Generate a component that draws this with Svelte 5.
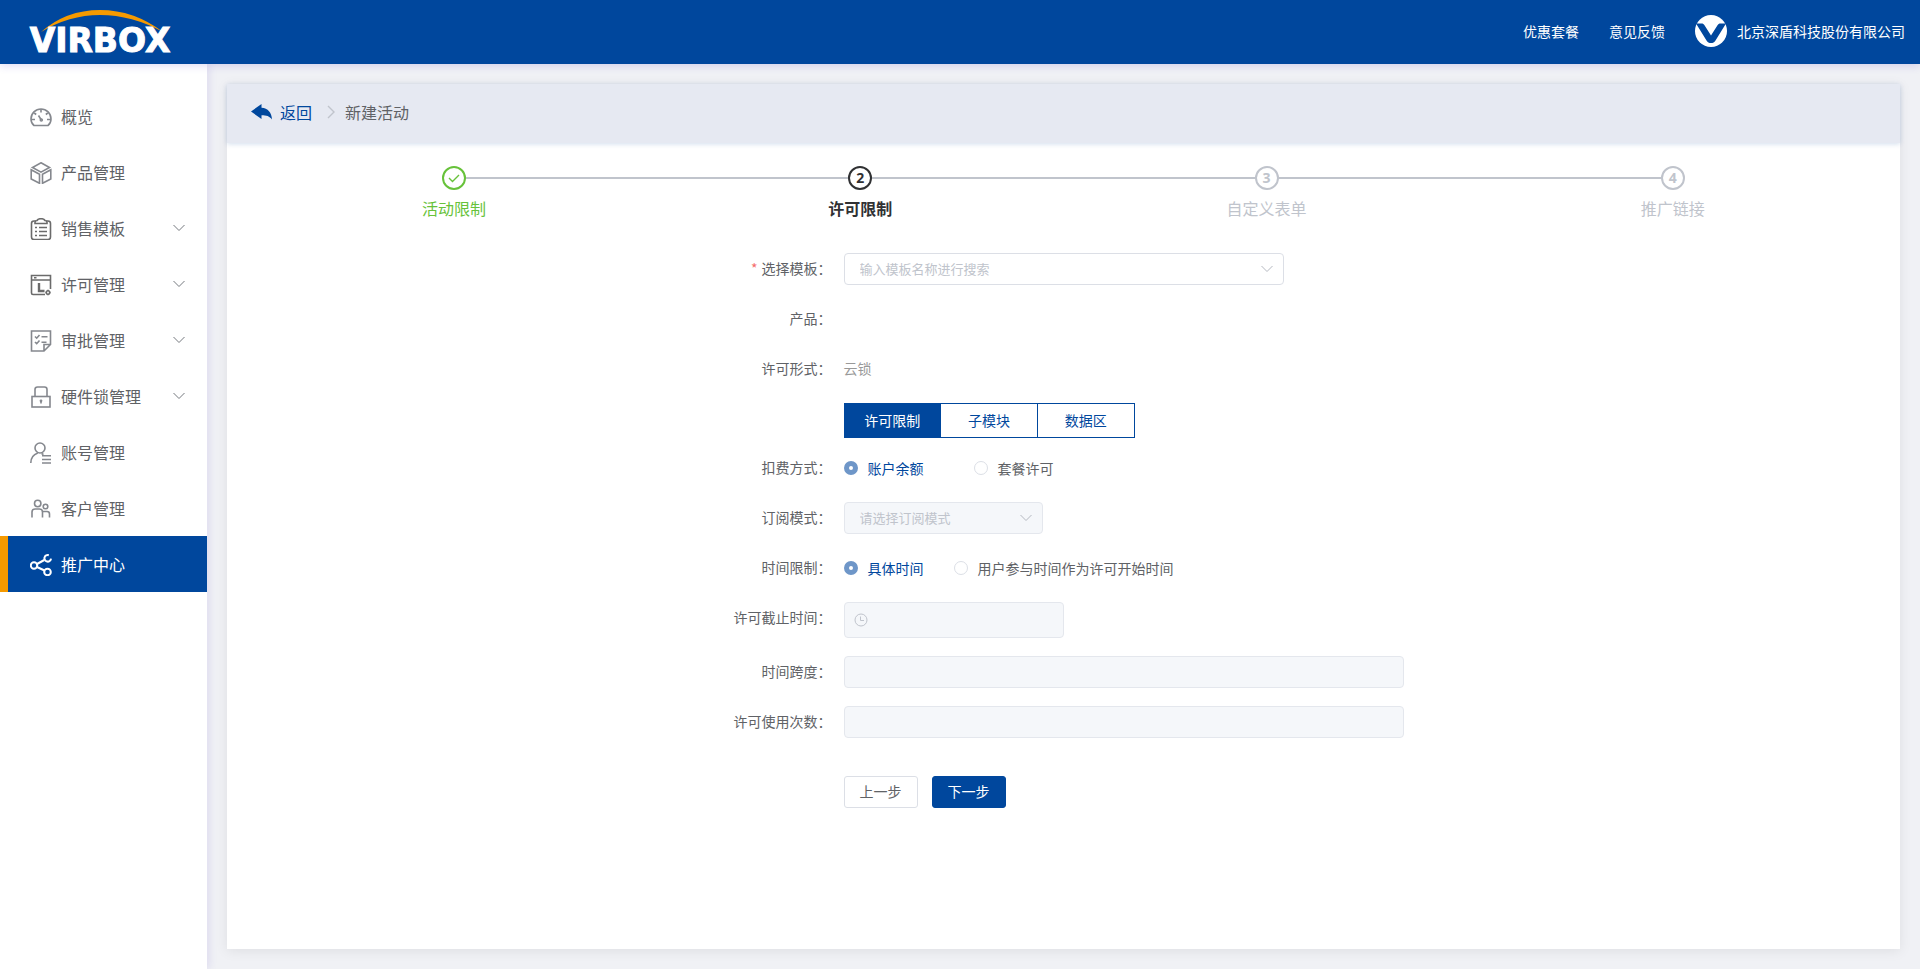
<script lang="ts">
	type MenuItem = { icon: string; label: string; children?: boolean; active?: boolean };

	const menu: MenuItem[] = [
		{ icon: 'gauge', label: '概览' },
		{ icon: 'box', label: '产品管理' },
		{ icon: 'clipboard', label: '销售模板', children: true },
		{ icon: 'license', label: '许可管理', children: true },
		{ icon: 'audit', label: '审批管理', children: true },
		{ icon: 'lock', label: '硬件锁管理', children: true },
		{ icon: 'account', label: '账号管理' },
		{ icon: 'customer', label: '客户管理' },
		{ icon: 'share', label: '推广中心', active: true }
	];

	const steps = [
		{ title: '活动限制', status: 'finish' },
		{ title: '许可限制', status: 'process' },
		{ title: '自定义表单', status: 'wait' },
		{ title: '推广链接', status: 'wait' }
	];

	const tabs = ['许可限制', '子模块', '数据区'];

	let activeTab = $state(0);
	let payMode = $state('balance');
	let timeMode = $state('fixed');
</script>

{#snippet chevron()}
	<svg class="chevron" viewBox="0 0 12 8" aria-hidden="true"><path d="M.5 1 6 6.5 11.5 1" /></svg>
{/snippet}

{#snippet menuIcon(name: string)}
	<svg class="menu-icon {name}" viewBox="0 0 22 22" aria-hidden="true">
		{#if name === 'gauge'}
			<path d="M4 19.500C2 18 1 15.500 1 13a10 10 0 0 1 20 0c0 2.500-1 5-3 6.500z" />
			<path d="M11 3v3.500M4.200 7l2 1.500M17.800 7l-2 1.500M1 13.500h4M17 13.500h4M8.500 9.500l2.500 4" />
			<circle cx="11.300" cy="14" r="1" />
		{:else if name === 'box'}
			<path d="m11 .8 8.500 4.700L11 10.200 2.500 5.500zM1.200 7.800l8.300 4.500v9L1.200 17zM20.800 7.800l-8.300 4.500v9l8.300-4.300z" />
		{:else if name === 'clipboard'}
			<rect x="1.500" y="3" width="19" height="18.500" rx="2.500" />
			<path class="paper" d="M5 5.500V4.200C5 3 6 2.700 7 2.500 7.800 1 9 .7 11 .7s3.200.3 4 1.800c1 .2 2 .5 2 1.700v1.300z" />
			<path d="M5 9.500h2M9 9.500h8M5 13.500h2M9 13.500h8M5 17.500h2M9 17.500h8" />
		{:else if name === 'license'}
			<path d="M15 20.500H3A1.500 1.500 0 0 1 1.500 19V1.500h19V15M1.500 6h19M4 3.800h2.500" />
			<path class="heavy" d="M9 9v8h5.500" />
			<circle cx="18" cy="18.500" r="1.700" />
			<path d="M18 15.800v1M18 20.200v1M15.500 18.500h.8M19.700 18.500h.8" />
		{:else if name === 'audit'}
			<path d="M14 21H1.500V1h19v13.500zM14 21v-6.500h6.500" />
			<path d="m5 6.500 1.700 1.700L9.500 5M5 12l1.700 1.700 2.800-3.200M11.500 6.700h6M11.500 12.200h5" />
		{:else if name === 'lock'}
			<rect x="2" y="10.500" width="18" height="10.500" />
			<path d="M5 10.500V3.500C5 2 6 1 7.500 1h7C16 1 17 2 17 3.500v7M11 14.500v3" />
			<circle cx="11" cy="14.800" r=".6" />
		{:else if name === 'account'}
			<circle cx="10" cy="6" r="5" />
			<path d="M.8 21c0-5 2.700-8.500 7-10M11.500 11.500l2 1M12 13.800h9M12 17.500h9M12 21h9" />
		{:else if name === 'customer'}
			<circle cx="7.700" cy="5.500" r="3.200" />
			<circle cx="15.500" cy="8.500" r="2.300" />
			<path d="M2 19.500V14c0-2 1-3 3-3h4.500c2 0 3 1 3 3v5.500M12.500 13.500H17c1.500 0 2.500 1 2.500 2.500v3.500" />
		{:else}
			<circle cx="4" cy="11.500" r="3.200" />
			<path d="M18.800 1.200a3.300 3.300 0 1 0 2.200 3.500" />
			<circle cx="17.500" cy="18" r="3.300" />
			<path d="m7 10 7.300-4M7 13l7.500 3.500" />
		{/if}
	</svg>
{/snippet}

<header class="topbar">
	<a class="logo" href="/" aria-label="VIRBOX">
		<svg width="160" height="64" viewBox="0 0 160 64" aria-hidden="true">
			<path d="M21 32Q46 10 80 10t63 22Q112 15 80 15 49 15 21 32z" fill="#f59a00" />
			<text x="80" y="52" text-anchor="middle">VIRBOX</text>
		</svg>
	</a>
	<nav class="top-links">
		<a href="#package">优惠套餐</a>
		<a href="#feedback">意见反馈</a>
		<a class="company" href="#account">
			<svg width="32" height="32" viewBox="0 0 32 32" aria-hidden="true">
				<circle cx="16" cy="16" r="16" fill="#fff" />
				<path d="M1 8.500h5.500c1.500 0 2.200.5 3 1.800L16 20.500l6.500-10.200c.8-1.300 1.500-1.800 3-1.800H31L20.500 25.500c-1.200 2-2.500 2.500-4.500 2.500s-3.300-.5-4.500-2.500z" fill="#00479d" />
			</svg>
			<span>北京深盾科技股份有限公司</span>
		</a>
	</nav>
</header>

<div class="layout">
	<aside class="sidebar">
		<nav>
			{#each menu as item}
				<a class="menu-item" class:active={item.active} href="#{item.icon}">
					{@render menuIcon(item.icon)}
					<span>{item.label}</span>
					{#if item.children}{@render chevron()}{/if}
				</a>
			{/each}
		</nav>
	</aside>

	<main class="content">
		<section class="card">
			<div class="breadcrumb">
				<a class="back" href="#list">
					<svg width="21" height="16" viewBox="0 0 21 16" aria-hidden="true">
						<path d="M0 7.500 10.500 0v3.800C17 4.200 20.500 8.500 21 15.500c-2.500-3.500-5.500-4.300-10.500-4.300V15z" fill="#00479d" />
					</svg>
					返回
				</a>
				<svg class="divider" width="8" height="14" viewBox="0 0 8 14" aria-hidden="true"><path d="m1 1 6 6-6 6" /></svg>
				<span>新建活动</span>
			</div>

			<ol class="steps">
				{#each steps as step, i}
					<li class="step {step.status}">
						<span class="step-icon">
							{#if step.status === 'finish'}
								<svg width="12" height="9" viewBox="0 0 12 9" aria-hidden="true"><path d="m1 4 3.500 3.500L11 1" /></svg>
							{:else}
								{i + 1}
							{/if}
						</span>
						<span class="step-title">{step.title}</span>
					</li>
				{/each}
			</ol>

			<form class="form" onsubmit={(e) => e.preventDefault()}>
				<div class="row">
					<label class="label required" for="template">选择模板：</label>
					<div class="select wide">
						<select id="template">
							<option value="">输入模板名称进行搜索</option>
						</select>
						{@render chevron()}
					</div>
				</div>
				<div class="row">
					<span class="label">产品：</span>
				</div>
				<div class="row">
					<span class="label">许可形式：</span>
					<span class="value">云锁</span>
				</div>
				<div class="row tabs-row">
					<div class="tabs" role="tablist">
						{#each tabs as tab, i}
							<button
								type="button"
								role="tab"
								aria-selected={activeTab === i}
								class:active={activeTab === i}
								onclick={() => (activeTab = i)}>{tab}</button>
						{/each}
					</div>
				</div>
				<div class="row" role="radiogroup" aria-labelledby="pay-label">
					<span class="label" id="pay-label">扣费方式：</span>
					<div class="radios spaced">
						<label><input type="radio" value="balance" bind:group={payMode} disabled />账户余额</label>
						<label><input type="radio" value="package" bind:group={payMode} disabled />套餐许可</label>
					</div>
				</div>
				<div class="row">
					<label class="label" for="subscribe">订阅模式：</label>
					<div class="select">
						<select id="subscribe" disabled>
							<option value="">请选择订阅模式</option>
						</select>
						{@render chevron()}
					</div>
				</div>
				<div class="row" role="radiogroup" aria-labelledby="time-label">
					<span class="label" id="time-label">时间限制：</span>
					<div class="radios">
						<label><input type="radio" value="fixed" bind:group={timeMode} disabled />具体时间</label>
						<label><input type="radio" value="joined" bind:group={timeMode} disabled />用户参与时间作为许可开始时间</label>
					</div>
				</div>
				<div class="row">
					<label class="label" for="deadline">许可截止时间：</label>
					<div class="date">
						<svg width="14" height="14" viewBox="0 0 14 14" aria-hidden="true"><circle cx="7" cy="7" r="6" /><path d="M6.500 3.500v4h3.500" /></svg>
						<input id="deadline" type="text" disabled />
					</div>
				</div>
				<div class="row">
					<label class="label" for="span">时间跨度：</label>
					<input id="span" class="text" type="text" disabled />
				</div>
				<div class="row">
					<label class="label" for="times">许可使用次数：</label>
					<input id="times" class="text" type="text" disabled />
				</div>
				<div class="actions">
					<button type="button">上一步</button>
					<button type="submit" class="primary">下一步</button>
				</div>
			</form>
		</section>
	</main>
</div>

<style>
	:global(body) {
		background: #f0f1f5;
		color: #606266;
		font-family: 'Noto Sans CJK SC', sans-serif;
		font-size: 14px;
	}

	:global(#app) {
		display: flex;
		flex-direction: column;
		min-height: 100vh;
	}

	a {
		color: inherit;
		text-decoration: none;
	}

	input,
	select,
	button {
		box-sizing: border-box;
		margin: 0;
		font-family: inherit;
		font-size: 14px;
	}

	.topbar {
		position: relative;
		z-index: 2;
		display: flex;
		align-items: center;
		justify-content: space-between;
		height: 64px;
		padding: 0 15px 0 20px;
		background: #00479d;
		box-shadow: 0 2px 8px rgba(80, 60, 200, 0.18);
		color: #fff;
	}

	.logo svg {
		display: block;
	}

	.logo text {
		fill: #fff;
		stroke: #fff;
		stroke-width: 1;
		font-family: 'DejaVu Sans', sans-serif;
		font-size: 33px;
		font-weight: 700;
	}

	.top-links {
		display: flex;
		align-items: center;
		gap: 30px;
		padding-bottom: 2px;
	}

	.company {
		display: flex;
		align-items: center;
		gap: 10px;
	}

	.layout {
		display: flex;
		flex: 1;
	}

	.sidebar {
		flex: none;
		width: 207px;
		padding-top: 24px;
		background: #fff;
		box-shadow: 2px 0 8px rgba(80, 60, 200, 0.12);
	}

	.menu-item {
		display: flex;
		align-items: center;
		box-sizing: border-box;
		height: 56px;
		padding: 0 22px;
		border-left: 8px solid transparent;
		font-size: 16px;
	}

	.menu-item.active {
		border-left-color: #f59a00;
		background: #00479d;
		color: #fff;
	}

	.menu-icon {
		width: 22px;
		height: 22px;
		margin: 2px 9px 0 0;
		fill: none;
		stroke: #85888e;
		stroke-width: 1.6;
	}

	.menu-icon.clipboard,
	.menu-icon.license {
		stroke: #6b6b6b;
	}

	.active .menu-icon {
		stroke: #fff;
		stroke-width: 2;
	}

	.menu-icon .paper {
		fill: #fff;
	}

	.menu-icon .heavy {
		stroke-width: 2.4;
	}

	.chevron {
		width: 12px;
		height: 8px;
		fill: none;
		stroke: #75787e;
	}

	.menu-item .chevron {
		margin-left: auto;
	}

	.content {
		display: flex;
		flex: 1;
		padding: 20px;
	}

	.card {
		flex: 1;
		background: #fff;
		box-shadow: 0 2px 12px rgba(0, 0, 0, 0.08);
	}

	.breadcrumb {
		display: flex;
		align-items: center;
		box-sizing: border-box;
		height: 59px;
		padding: 0 24px 3px;
		background: #e6e9f2;
		box-shadow: 0 1px 5px rgba(0, 71, 157, 0.18);
		font-size: 16px;
	}

	.back {
		display: flex;
		align-items: center;
		gap: 8px;
		color: #00479d;
	}

	.divider {
		margin: 0 10px 0 15px;
		fill: none;
		stroke: #c0c4cc;
		stroke-width: 1.4;
	}

	.steps {
		display: flex;
		margin: 0;
		padding: 23px 24px 27px;
		list-style: none;
	}

	.step {
		position: relative;
		display: flex;
		flex: 1;
		flex-direction: column;
		align-items: center;
		color: #c0c4cc;
	}

	.step:not(:last-child)::after {
		content: '';
		position: absolute;
		top: 11px;
		left: 50%;
		width: 100%;
		height: 2px;
		background: #c0c4cc;
	}

	.step-icon {
		z-index: 1;
		display: flex;
		align-items: center;
		justify-content: center;
		box-sizing: border-box;
		width: 24px;
		height: 24px;
		border: 2px solid;
		border-radius: 50%;
		background: #fff;
		font-family: 'Open Sans', sans-serif;
		font-weight: 700;
		line-height: 20px;
	}

	.step-icon svg {
		fill: none;
		stroke: currentColor;
		stroke-width: 1.4;
	}

	.step-title {
		font-size: 16px;
		line-height: 36px;
	}

	.step.finish {
		color: #67c23a;
	}

	.step.process {
		color: #303133;
	}

	.process .step-title {
		font-weight: 700;
	}

	.form {
		width: 680px;
		max-width: 100%;
		margin: 0 auto;
		padding-bottom: 40px;
	}

	.row {
		display: flex;
		min-height: 32px;
		margin-bottom: 18px;
		line-height: 30px;
	}

	.label {
		flex: none;
		box-sizing: border-box;
		width: 120px;
		padding-right: 12px;
		text-align: right;
	}

	.required::before {
		content: '*';
		margin-right: 4px;
		color: #f56c6c;
	}

	.value {
		color: #999;
	}

	.select {
		position: relative;
		width: 199px;
	}

	.select.wide {
		width: 440px;
	}

	.select select {
		display: block;
		width: 100%;
		height: 32px;
		padding: 0 30px 2px 15px;
		border: 1px solid #dcdfe6;
		border-radius: 4px;
		appearance: none;
		background: #fff;
		color: #c0c4cc;
		font-size: 13px;
		opacity: 1;
	}

	.select .chevron {
		position: absolute;
		top: 12px;
		right: 11px;
		stroke: #b4b8c0;
		pointer-events: none;
	}

	.select select:disabled,
	.date,
	.text {
		border: 1px solid #e4e7ed;
		border-radius: 4px;
		background: #f5f7fa;
	}

	.tabs-row {
		margin-bottom: 14px;
		padding-left: 120px;
	}

	.tabs {
		display: flex;
		width: 291px;
	}

	.tabs button {
		flex: 1;
		height: 35px;
		padding: 0 0 2px;
		border: 1px solid #00479d;
		background: #fff;
		color: #00479d;
	}

	.tabs button + button {
		margin-left: -1px;
	}

	.tabs button.active {
		background: #00479d;
		color: #fff;
	}

	.radios {
		display: flex;
		gap: 30px;
	}

	.radios.spaced {
		gap: 50px;
	}

	.radios label {
		display: flex;
		align-items: center;
		gap: 10px;
	}

	.radios label:has(:checked) {
		color: #00479d;
	}

	.radios input {
		width: 14px;
		height: 14px;
		border: 1px solid #dcdfe6;
		border-radius: 50%;
		appearance: none;
		background: #fff;
	}

	.radios input:checked {
		border: 5px solid #6e96c8;
	}

	.date {
		display: flex;
		align-items: center;
		box-sizing: border-box;
		width: 220px;
		height: 36px;
		padding: 0 9px;
	}

	.date svg {
		flex: none;
		fill: none;
		stroke: #c0c4cc;
	}

	.date input {
		flex: 1;
		min-width: 0;
		border: 0;
		background: none;
	}

	.text {
		flex: 1;
		min-width: 0;
		height: 32px;
		padding: 0 15px;
	}

	.actions {
		display: flex;
		gap: 14px;
		padding: 20px 0 0 120px;
	}

	.actions button {
		width: 74px;
		height: 32px;
		padding: 0 0 2px;
		border: 1px solid #dcdfe6;
		border-radius: 3px;
		background: #fff;
		color: #606266;
	}

	.actions .primary {
		border-color: #00479d;
		background: #00479d;
		color: #fff;
	}
</style>
